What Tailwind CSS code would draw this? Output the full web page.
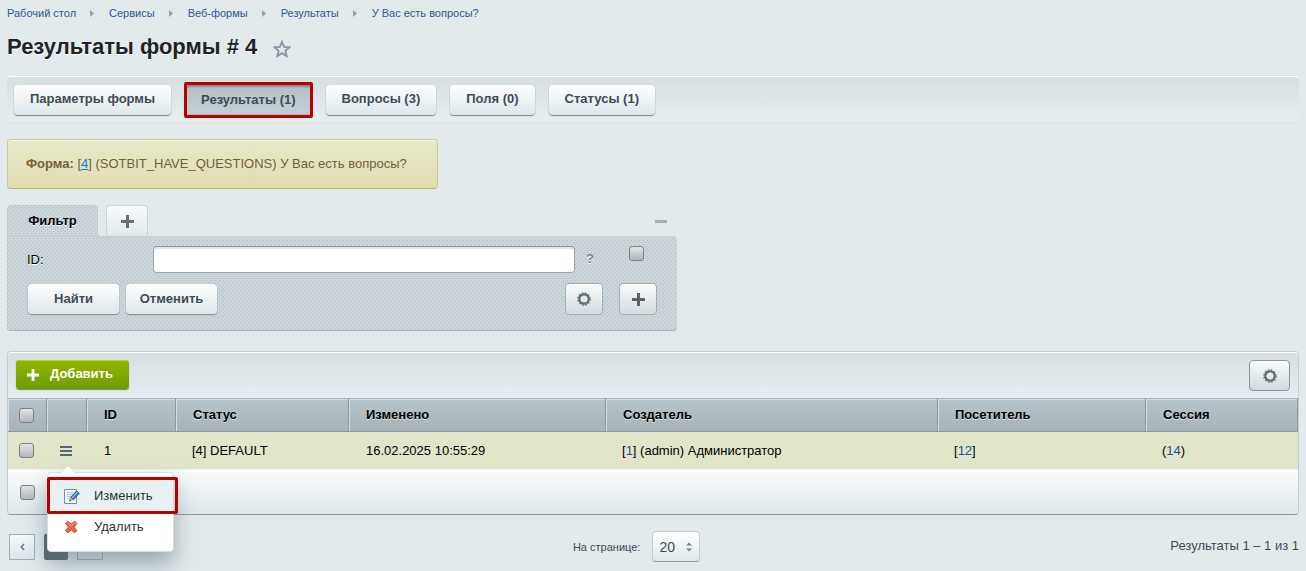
<!DOCTYPE html>
<html lang="ru">
<head>
    <meta charset="UTF-8" />
    <meta name="viewport" content="width=device-width, initial-scale=1.0"/>
    <title>Результаты формы # 4</title>
    <script src="https://cdn.jsdelivr.net/npm/@tailwindcss/browser@4"></script>
</head>
<body class="min-h-screen bg-[#e2eaec] font-['Liberation_Sans',Arial,sans-serif] text-[13px] leading-4 text-black px-[7px]">

<!-- shared icons -->
<svg class="hidden">
    <symbol id="arrow" viewBox="0 0 5 7"><path d="M0 0L4 3.5L0 7Z" fill="#9aa1a7"/></symbol>
    <symbol id="plus" viewBox="0 0 13 13"><path d="M5 0h3v5h5v3H8v5H5V8H0V5h5Z" fill="currentColor"/></symbol>
    <symbol id="gear" viewBox="0 0 14 14">
        <circle cx="7" cy="7" r="4.700" fill="none" stroke="#626d73" stroke-width="2.200"/>
        <circle cx="7" cy="7" r="6.100" fill="none" stroke="#626d73" stroke-width="1.300" stroke-dasharray="1.800 1.394"/>
    </symbol>
</svg>

<nav class="flex items-center gap-[14px] pt-[5px] text-[11px] text-[#2d5896]">
    <a href="#">Рабочий стол</a>
    <svg class="w-[5px] h-[7px]"><use href="#arrow"/></svg>
    <a href="#">Сервисы</a>
    <svg class="w-[5px] h-[7px]"><use href="#arrow"/></svg>
    <a href="#">Веб-формы</a>
    <svg class="w-[5px] h-[7px]"><use href="#arrow"/></svg>
    <a href="#">Результаты</a>
    <svg class="w-[5px] h-[7px]"><use href="#arrow"/></svg>
    <a href="#">У Вас есть вопросы?</a>
</nav>

<div class="flex items-center gap-4 mt-3 h-7">
    <h1 class="text-[22px] leading-7 font-bold text-[#1f2327] [text-shadow:0_1px_#fff]">Результаты формы # 4</h1>
    <button type="button" aria-label="В избранное" class="pt-1">
        <svg class="size-[18px]" viewBox="0 0 18 18"><path d="M9 2l2.100 4.900 5.300.4-4 3.500 1.200 5.200L9 13.200 4.400 16l1.200-5.200-4-3.500 5.300-.4Z" fill="none" stroke="#8b95a3" stroke-width="1.900"/></svg>
    </button>
</div>

<div class="flex items-start gap-[14px] mt-[15px] h-[47px] px-[7px] pt-2 rounded-t border-t border-t-white border-b border-b-[#dbe2e4] bg-linear-to-b from-[#d6dfe1] to-[#e8eef0]">
    <button type="button" class="h-[30px] px-4 pb-[2px] rounded bg-linear-to-b from-white to-[#dde7ea] shadow-[0_1px_1px_#7e8c8f,0_0_1px_#9cabaf] font-bold text-[#3f4b54]">Параметры формы</button>
    <div class="relative">
        <button type="button" class="h-[30px] px-4 rounded bg-linear-to-b from-[#b3c0c7] to-[#c4d0d5] shadow-[inset_0_2px_2px_#7d8b93,inset_0_0_2px_#7d8b93] font-bold text-[#3f4b54]">Результаты (1)</button>
        <div class="absolute -inset-x-px -inset-y-[3px] border-3 border-[#b80000] rounded-xs pointer-events-none"></div>
    </div>
    <button type="button" class="h-[30px] px-4 pb-[2px] rounded bg-linear-to-b from-white to-[#dde7ea] shadow-[0_1px_1px_#7e8c8f,0_0_1px_#9cabaf] font-bold text-[#3f4b54]">Вопросы (3)</button>
    <button type="button" class="h-[30px] px-4 pb-[2px] rounded bg-linear-to-b from-white to-[#dde7ea] shadow-[0_1px_1px_#7e8c8f,0_0_1px_#9cabaf] font-bold text-[#3f4b54]">Поля (0)</button>
    <button type="button" class="h-[30px] px-4 pb-[2px] rounded bg-linear-to-b from-white to-[#dde7ea] shadow-[0_1px_1px_#7e8c8f,0_0_1px_#9cabaf] font-bold text-[#3f4b54]">Статусы (1)</button>
</div>

<div class="w-fit min-w-[431px] mt-4 h-[50px] px-[18px] pt-4 rounded border border-[#d3c796] border-b-[#bfb077] bg-linear-to-b from-[#e7e9cb] to-[#e1ddb0] shadow-[inset_0_1px_#f7f7e8] text-[#716233]">
    <b>Форма:</b> [<a href="#" class="text-[#1d7bd0] underline">4</a>] (SOTBIT_HAVE_QUESTIONS) У Вас есть вопросы?
</div>

<form class="max-w-[670px] mt-4">
    <div class="flex items-end">
        <button type="button" class="h-[31px] w-[91px] rounded-t bg-[#cbd5da] bg-[conic-gradient(from_270deg_at_1px_1px,#afbac0_25%,transparent_0),conic-gradient(from_270deg_at_1px_1px,#afbac0_25%,transparent_0)] bg-size-[4px_4px] [background-position:0_0,2px_2px] font-bold [text-shadow:0_1px_#fff]">Фильтр</button>
        <button type="button" aria-label="Добавить фильтр" class="ml-2 h-[31px] w-[42px] grid place-items-center pt-px rounded-t border border-b-0 border-[#ccd6d9] bg-linear-to-b from-[#f8fafa] to-[#e3e9eb] text-[#66727a]">
            <svg class="size-[13px]"><use href="#plus"/></svg>
        </button>
        <button type="button" aria-label="Свернуть" class="ml-auto mr-[10px] mb-[13px] w-3 h-[3px] bg-[#a7b1b5]"></button>
    </div>
    <div class="h-[95px] px-5 pt-[10px] rounded-b rounded-tr border-b border-b-[#a5b2b8] bg-[#cbd5da] bg-[conic-gradient(from_270deg_at_1px_1px,#afbac0_25%,transparent_0),conic-gradient(from_270deg_at_1px_1px,#afbac0_25%,transparent_0)] bg-size-[4px_4px] [background-position:0_0,2px_2px]">
        <div class="flex items-start">
            <label for="find_id" class="w-[126px] pt-[6px] [text-shadow:0_1px_#fff]">ID:</label>
            <input id="find_id" type="text" class="min-w-0 flex-1 h-[27px] px-2 rounded border border-[#9aa8b0] border-t-[#87949c] bg-white shadow-[inset_0_2px_1px_#e3e7e9]">
            <span class="w-[54px] pl-[11px] pt-[5px] font-bold text-[#7c888f] [text-shadow:0_1px_#fff]">?</span>
            <input type="checkbox" aria-label="Выбрать поле" class="appearance-none size-[15px] mr-[13px] rounded-[3px] border border-[#7a8186] bg-linear-to-b from-[#e2e4e5] to-[#b3b7b9]">
        </div>
        <div class="flex items-start mt-[10px]">
            <button type="submit" class="h-[30px] w-[91px] ml-px mt-px pb-px rounded bg-linear-to-b from-white to-[#dde7ea] shadow-[0_1px_1px_#7e8c8f,0_0_1px_#9cabaf] font-bold text-[#3f4b54]">Найти</button>
            <button type="reset" class="h-[30px] w-[91px] ml-[7px] mt-px pb-px rounded bg-linear-to-b from-white to-[#dde7ea] shadow-[0_1px_1px_#7e8c8f,0_0_1px_#9cabaf] font-bold text-[#3f4b54]">Отменить</button>
            <button type="button" aria-label="Настройки" class="ml-auto h-8 w-[38px] grid place-items-center rounded border border-[#a3afb5] bg-linear-to-b from-[#fafbfb] to-[#d3dcdf]">
                <svg class="size-[14px]"><use href="#gear"/></svg>
            </button>
            <button type="button" aria-label="Добавить условие" class="ml-4 h-8 w-[38px] grid place-items-center rounded border border-[#a3afb5] bg-linear-to-b from-[#fafbfb] to-[#d3dcdf] text-[#59656d]">
                <svg class="size-[13px]"><use href="#plus"/></svg>
            </button>
        </div>
    </div>
</form>

<div class="relative mt-5 border border-[#c5cfd3] border-b-[#8c989b] rounded">
    <div class="flex items-start justify-between h-[46px] px-2 pt-[7px] rounded-t border-t border-t-white bg-linear-to-b from-[#d6e0e2] to-[#e8eef1]">
        <button type="button" class="flex items-center h-[29px] pl-[11px] pr-4 gap-[11px] rounded-[3px] bg-linear-to-b from-[#92b602] to-[#6f9c00] shadow-[inset_0_1px_#b2d028,0_1px_1px_#75895a] font-bold text-white">
            <svg class="size-[12px]"><use href="#plus" /></svg><span class="pb-[2px]">Добавить</span>
        </button>
        <button type="button" aria-label="Настройки" class="h-[31px] w-[41px] grid place-items-center rounded border border-[#89959a] bg-linear-to-b from-[#fafbfb] to-[#d0dadd]">
            <svg class="size-[14px]"><use href="#gear"/></svg>
        </button>
    </div>

    <table class="w-full table-fixed border-separate border-spacing-0 text-left">
        <colgroup>
            <col class="w-[39px]"><col class="w-10"><col class="w-[89px]"><col class="w-[173px]">
            <col class="w-[257px]"><col><col class="w-[208px]"><col class="w-[152px]">
        </colgroup>
        <thead>
            <tr class="h-[34px] bg-linear-to-b from-[#b7c5cc] to-[#a7b2b5] [text-shadow:0_1px_#dde4e6] *:border-t *:border-t-[#a3b3bb] *:border-b *:border-b-[#8c989c] *:border-r *:border-r-[#8d999e] *:shadow-[inset_1px_1px_#d5dfe3]">
                <th class="pl-[11px]"><input type="checkbox" aria-label="Выбрать все" class="block appearance-none size-[15px] rounded-[3px] border border-[#7a8186] bg-linear-to-b from-[#e2e4e5] to-[#b3b7b9]"></th>
                <th></th>
                <th class="pl-[17px]">ID</th>
                <th class="pl-[17px]">Статус</th>
                <th class="pl-[17px]">Изменено</th>
                <th class="pl-[17px]">Создатель</th>
                <th class="pl-[17px]">Посетитель</th>
                <th class="pl-[17px]">Сессия</th>
            </tr>
        </thead>
        <tbody>
            <tr class="h-[37px] bg-[#e1e6ca]">
                <td class="pl-[11px]"><input type="checkbox" aria-label="Выбрать строку 1" class="block appearance-none size-[15px] rounded-[3px] border border-[#7a8186] bg-linear-to-b from-[#e2e4e5] to-[#b3b7b9]"></td>
                <td class="pl-[13px]">
                    <button type="button" aria-label="Действия" class="block">
                        <svg class="w-3 h-[10px]" viewBox="0 0 12 10"><path d="M0 1h12M0 5h12M0 9h12" stroke="#506771" stroke-width="2"/></svg>
                    </button>
                </td>
                <td class="pl-[17px]">1</td>
                <td class="pl-4">[4] DEFAULT</td>
                <td class="pl-[17px]">16.02.2025 10:55:29</td>
                <td class="pl-4">[<a href="#" class="text-[#204f9c]">1</a>] (admin) Администратор</td>
                <td class="pl-4">[<a href="#" class="text-[#204f9c]">12</a>]</td>
                <td class="pl-4">(<a href="#" class="text-[#204f9c]">14</a>)</td>
            </tr>
        </tbody>
    </table>

    <div class="flex items-center h-[45px] pl-3 rounded-b border-t border-t-[#f1f4ee] bg-linear-to-b from-[#fbfcfc] to-[#dde8ec]">
        <input type="checkbox" aria-label="Для всех" class="appearance-none size-[15px] rounded-[3px] border border-[#7a8186] bg-linear-to-b from-[#e2e4e5] to-[#b3b7b9]">
    </div>

    <!-- row action menu -->
    <div class="absolute left-[39px] top-[120px] w-[127px] h-20 pt-[7px] rounded border border-[#d3dee2] bg-white shadow-[0_12px_22px_#5c6f7a88]">
        <svg class="absolute left-3 -top-2 w-4 h-[9px]" viewBox="0 0 16 9"><path d="M0 8.500L8 .5l8 8V9H0Z" fill="#fff"/><path d="M0 8L8 .5 16 8" fill="none" stroke="#d3dee2"/></svg>
        <button type="button" class="relative flex items-center w-full h-[31px] pl-4 gap-[14px] bg-[#e9f0f2] text-[#2c3338]">
            <svg class="size-4" viewBox="0 0 16 16">
                <path d="M.5 1.500h12v14H.500Z" fill="#f4f8fe" stroke="#6d8fc7"/>
                <path d="M2.500 4.500h7M2.500 6.500h6M2.500 8.500h4M2.500 10.500h3" stroke="#b3c9ea"/>
                <path d="M6.500 9.500L12.500 3l2.800 2.300-6 6.400Z" fill="#4b82d0" stroke="#2b569a"/>
                <path d="M8 10l5.500-6" stroke="#9bc2f4"/>
                <path d="M6.500 9.500l2.800 2.200L5.500 13Z" fill="#f4d44d" stroke="#8d8132" stroke-width=".6"/>
                <path d="M5.500 13l.5-1.600 1.100 1Z" fill="#222"/>
            </svg>
            Изменить
            <span class="absolute -left-px -right-[5px] -top-[3px] -bottom-[3px] border-3 border-[#b80000] rounded-xs pointer-events-none"></span>
        </button>
        <button type="button" class="flex items-center w-full h-[31px] pl-4 gap-[14px] text-[#2c3338]">
            <svg class="size-4" viewBox="0 0 16 16">
                <path d="M3.500 2.200L7.200 5l3.600-2.800 2 2.300-2.900 3.600 3 3.700-2.300 2-3.400-2.900-3.600 2.900-2.100-2.100 3-3.600-3-3.600Z" fill="#e9694b" stroke="#c6402b" stroke-linejoin="round"/>
                <path d="M3.500 3.600l3.700 2.900 3.600-2.900" fill="none" stroke="#f6a58c"/>
            </svg>
            Удалить
        </button>
    </div>
</div>

<div class="flex items-center justify-between mt-4 h-[31px] text-[#3f4b54]">
    <nav class="flex items-center gap-[9px] pl-[2px]">
        <button type="button" aria-label="Назад" class="size-[26px] grid place-items-center border border-[#9db0b8] bg-linear-to-b from-[#f7f9fa] to-[#dbe5e9]">
            <svg class="w-[5px] h-2" viewBox="0 0 5 8"><path d="M4 1L1.300 4 4 7" fill="none" stroke="#66747c" stroke-width="1.500"/></svg>
        </button>
        <button type="button" class="w-6 h-[26px] rounded-xs bg-[#59656e] font-bold text-white">1</button>
        <button type="button" aria-label="Вперёд" class="size-[26px] grid place-items-center border border-[#9db0b8] bg-linear-to-b from-[#f7f9fa] to-[#dbe5e9]">
            <svg class="w-[5px] h-2" viewBox="0 0 5 8"><path d="M1 1l2.700 3L1 7" fill="none" stroke="#66747c" stroke-width="1.500"/></svg>
        </button>
    </nav>
    <div class="flex items-center gap-3">
        <label for="per_page" class="text-[11px]">На странице:</label>
        <div class="relative">
            <select id="per_page" class="block appearance-none w-12 h-[31px] pl-[6px] rounded border border-[#c3cdd1] border-b-[#8f9b9f] bg-linear-to-b from-white to-[#dfe8eb] text-[14px]">
                <option>20</option>
            </select>
            <svg class="absolute right-2 top-[11px] w-[6px] h-[10px] pointer-events-none" viewBox="0 0 6 10"><path d="M0 3.500L3 .5l3 3ZM0 6.500l3 3 3-3Z" fill="#76838b"/></svg>
        </div>
    </div>
    <span class="pb-[2px]">Результаты 1 – 1 из 1</span>
</div>

</body>
</html>
